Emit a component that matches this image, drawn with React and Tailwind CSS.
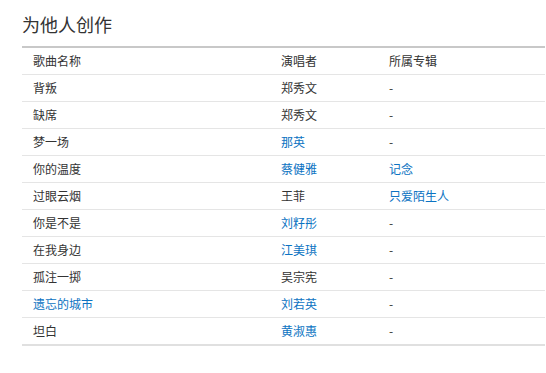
const rows = [
  { song: '背叛', singer: '郑秀文', album: '-' },
  { song: '缺席', singer: '郑秀文', album: '-' },
  { song: '梦一场', singer: '那英', singerLink: true, album: '-' },
  { song: '你的温度', singer: '蔡健雅', singerLink: true, album: '记念', albumLink: true },
  { song: '过眼云烟', singer: '王菲', album: '只爱陌生人', albumLink: true },
  { song: '你是不是', singer: '刘籽彤', singerLink: true, album: '-' },
  { song: '在我身边', singer: '江美琪', singerLink: true, album: '-' },
  { song: '孤注一掷', singer: '吴宗宪', album: '-' },
  { song: '遗忘的城市', songLink: true, singer: '刘若英', singerLink: true, album: '-' },
  { song: '坦白', singer: '黄淑惠', singerLink: true, album: '-' },
]

const Cell = ({ text, link }) => (
  <span className={link ? 'text-[#0c73c2]' : 'text-[#333]'}>{text}</span>
)

export default function App() {
  return (
    <div
      className="w-[546px] h-[373px] bg-white pl-[22px] pr-[1px] pt-[12px]"
      style={{ fontFamily: '"Noto Sans CJK SC", "Noto Sans", sans-serif' }}
    >
      <h2 className="text-[18px] leading-[24px] text-[#333] font-normal h-[34px]">为他人创作</h2>
      <div className="border-t-2 border-b-2 border-t-[#c8c8c8] border-b-[#e0e0e0] text-[12px]">
        <div className="grid grid-cols-[248px_108px_1fr] h-[26px] items-center pl-[11px] text-[#333]">
          <span>歌曲名称</span>
          <span>演唱者</span>
          <span>所属专辑</span>
        </div>
        {rows.map((r, i) => (
          <div
            key={i}
            className="grid grid-cols-[248px_108px_1fr] h-[27px] items-center pl-[11px] border-t border-[#e5e5e5]"
          >
            <Cell text={r.song} link={r.songLink} />
            <Cell text={r.singer} link={r.singerLink} />
            <Cell text={r.album} link={r.albumLink} />
          </div>
        ))}
      </div>
    </div>
  )
}
